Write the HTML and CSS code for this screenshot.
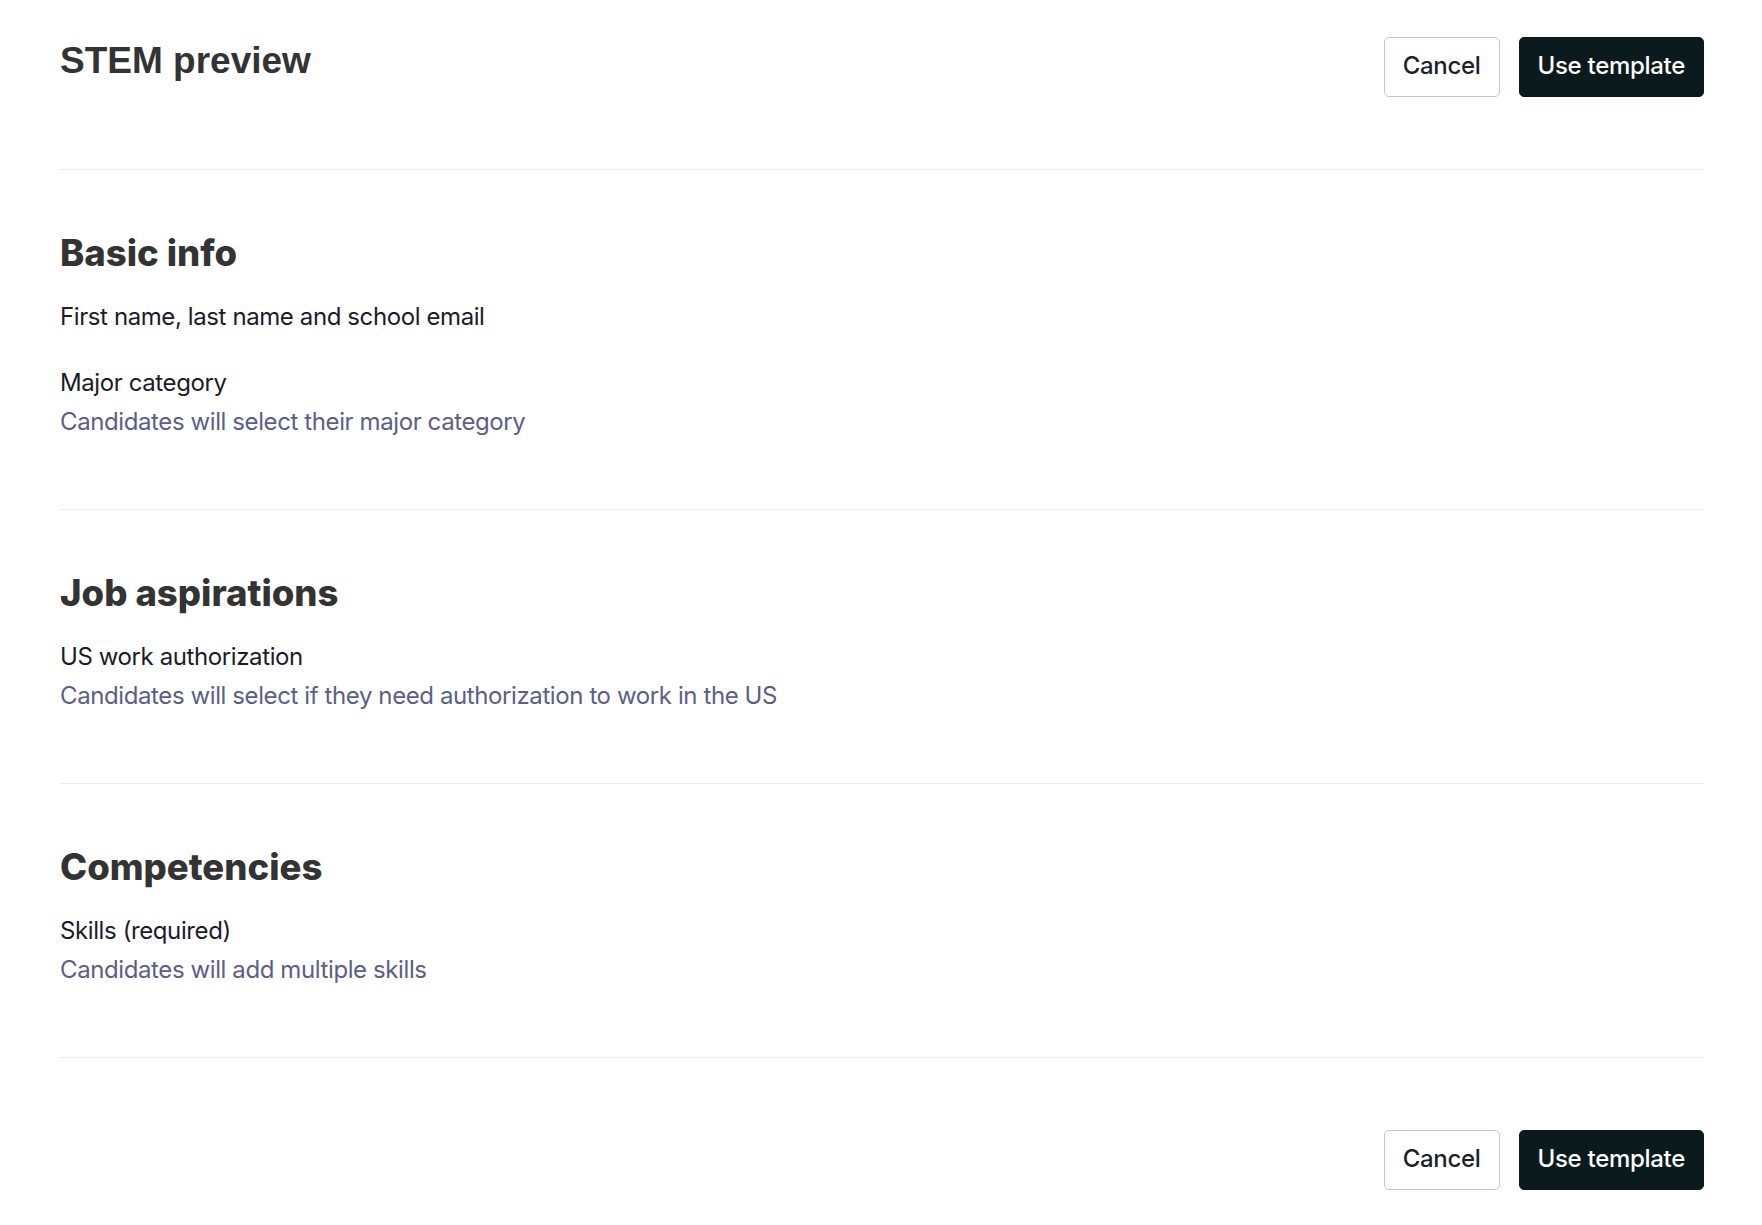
FILE: index.html
```html
<!DOCTYPE html>
<html lang="en">
<head>
    <meta charset="UTF-8">
    <meta name="viewport" content="width=device-width, initial-scale=1.0">
    <title>STEM preview</title>
    <link rel="stylesheet" href="styles.css">
</head>
<body>
    <div class="page">
        <header class="page-header">
            <h1>STEM preview</h1>
            <div class="actions">
                <button class="btn btn-outline">Cancel</button>
                <button class="btn btn-dark">Use template</button>
            </div>
        </header>

        <section class="section">
            <h2>Basic info</h2>
            <div class="fields">
                <div class="field">
                    <div class="field-label">First name, last name and school email</div>
                </div>
                <div class="field">
                    <div class="field-label">Major category</div>
                    <div class="field-desc">Candidates will select their major category</div>
                </div>
            </div>
        </section>

        <section class="section">
            <h2>Job aspirations</h2>
            <div class="fields">
                <div class="field">
                    <div class="field-label">US work authorization</div>
                    <div class="field-desc">Candidates will select if they need authorization to work in the US</div>
                </div>
            </div>
        </section>

        <section class="section">
            <h2>Competencies</h2>
            <div class="fields">
                <div class="field">
                    <div class="field-label">Skills (required)</div>
                    <div class="field-desc">Candidates will add multiple skills</div>
                </div>
            </div>
        </section>

        <footer class="page-footer">
            <div class="actions">
                <button class="btn btn-outline">Cancel</button>
                <button class="btn btn-dark">Use template</button>
            </div>
        </footer>
    </div>
</body>
</html>
```

FILE: styles.css
```css
* {
    margin: 0;
    padding: 0;
    box-sizing: border-box;
}

body {
    background-color: #fff;
    font-family: Inter, "Liberation Sans", Arial, sans-serif;
    color: #1c1c28;
}

.page {
    margin: 0 58px 0 60px;
}

.page-header {
    display: flex;
    justify-content: space-between;
    align-items: flex-start;
    padding: 37px 0 72px;
}

h1 {
    font-family: "Liberation Sans", Arial, sans-serif;
    font-size: 37px;
    font-weight: bold;
    line-height: 48px;
    color: #333;
}

.actions {
    display: flex;
    gap: 19px;
}

.btn {
    height: 60px;
    padding: 0 18px 4px;
    border-radius: 5px;
    font-family: Inter, "Liberation Sans", sans-serif;
    font-size: 24px;
    font-weight: 500;
    letter-spacing: -0.3px;
    cursor: pointer;
    display: flex;
    align-items: center;
}

.btn-outline {
    background-color: #fff;
    border: 1px solid #c4c4d8;
    color: #1f1f2b;
}

.btn-dark {
    background-color: #0b1b1d;
    border: 1px solid #0b1b1d;
    color: #fff;
}

.section {
    border-top: 1px solid #ececec;
    padding: 63px 0 69px;
}

h2 {
    font-size: 36.5px;
    font-weight: 800;
    line-height: 40px;
    color: #333;
}

.fields {
    margin-top: 26px;
    display: flex;
    flex-direction: column;
    gap: 30px;
}

.field-label,
.field-desc {
    font-size: 24px;
    line-height: 36px;
    letter-spacing: -0.4px;
}

.field-desc {
    margin-top: 3px;
    color: #5c5e88;
}

.page-footer {
    border-top: 1px solid #ececec;
    display: flex;
    justify-content: flex-end;
    padding: 72px 0 36px;
}
```
